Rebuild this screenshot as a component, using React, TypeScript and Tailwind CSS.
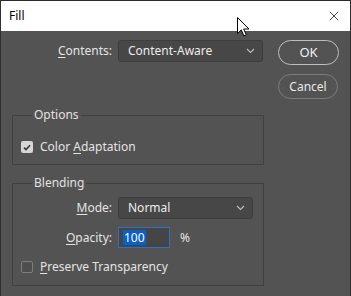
import { X } from "lucide-react";

function Chevron() {
  return (
    <svg width="9" height="6" viewBox="0 0 9 6" className="shrink-0">
      <path d="M1 1l3.5 3.5L8 1" fill="none" stroke="#bdbdbd" strokeWidth="1.1" />
    </svg>
  );
}

function Select({ value, width }: { value: string; width: string }) {
  return (
    <div
      className={`flex h-[22px] ${width} items-center justify-between rounded-[3px] border border-[#3d3d3d] bg-[#474747] pl-[9px] pr-[7px] text-[#ececec]`}
    >
      <span>{value}</span>
      <Chevron />
    </div>
  );
}

function Checkbox({ checked }: { checked: boolean }) {
  return checked ? (
    <div className="flex h-[12px] w-[12px] items-center justify-center rounded-[2px] bg-[#d6d6d6]">
      <svg width="8" height="7" viewBox="0 0 8 7">
        <path d="M1 3.6l2 2L7 1.2" fill="none" stroke="#3a3a3a" strokeWidth="1.6" />
      </svg>
    </div>
  ) : (
    <div className="h-[12px] w-[12px] rounded-[2px] border border-[#7e7e7e] bg-[#4e4e4e]" />
  );
}

function Group({ title, className, children }: { title: string; className: string; children: React.ReactNode }) {
  return (
    <div className={`relative ml-[11px] w-[252px] border border-[#404040] ${className}`}>
      <span className="absolute -top-[9px] left-[19px] bg-[#535353] px-[2px] leading-[16px] text-[#e2e2e2]">
        {title}
      </span>
      {children}
    </div>
  );
}

export default function App() {
  return (
    <div
      className="relative h-[296px] w-[351px] overflow-hidden border-x border-[#2f2f2f] bg-[#535353] text-[12px] text-[#e4e4e4]"
      style={{ fontFamily: '"Noto Sans", "Open Sans", sans-serif' }}
    >
      <div className="flex h-[31px] items-center justify-between border-t border-[#2b2b2b] bg-white pl-[8px] pr-[8px] text-black">
        <span className="text-[12px]">Fill</span>
        <X className="h-[16px] w-[16px]" strokeWidth={1.1} />
      </div>

      <svg className="absolute left-[236px] top-[17px]" width="13" height="20" viewBox="0 0 13 20">
        <path
          d="M0.5 0.5v16l3.8-3.6 2.6 6 2.4-1-2.6-5.9h5.3z"
          fill="#ffffff"
          stroke="#000000"
          strokeWidth="1"
          strokeLinejoin="round"
        />
      </svg>

      <div className="flex pt-[9px]">
        <div className="flex h-[22px] items-center">
          <span className="w-[117px] pr-[6px] text-right">
            <span className="underline underline-offset-2">C</span>ontents:
          </span>
          <Select value="Content-Aware" width="w-[145px]" />
        </div>
        <div className="ml-[15px] flex flex-col gap-[9px]">
          <div className="flex h-[25px] w-[61px] items-center justify-center rounded-full border-[1.5px] border-[#bdbdbd] text-[13px] text-[#f0f0f0]">
            OK
          </div>
          <div className="flex h-[25px] w-[60px] items-center justify-center rounded-full border border-[#7c7c7c] text-[#e8e8e8]">
            Cancel
          </div>
        </div>
      </div>

      <Group title="Options" className="mt-[16px] h-[50px]">
        <div className="flex items-center gap-[7px] pl-[8px] pt-[24px]">
          <Checkbox checked />
          <span className="leading-[14px]">
            Color <span className="underline underline-offset-2">A</span>daptation
          </span>
        </div>
      </Group>

      <Group title="Blending" className="mt-[18px] h-[103px]">
        <div className="flex items-center pt-[13px]">
          <span className="w-[105px] pr-[6px] text-right">
            <span className="underline underline-offset-2">M</span>ode:
          </span>
          <Select value="Normal" width="w-[135px]" />
        </div>
        <div className="mt-[8px] flex items-center">
          <span className="w-[105px] pr-[6px] text-right">
            <span className="underline underline-offset-2">O</span>pacity:
          </span>
          <div className="flex h-[21px] w-[52px] items-center border border-[#2f6fc4] bg-[#454545] pl-[4px]">
            <span className="bg-[#0b60c4] px-[1px] leading-[15px] text-white">100</span>
          </div>
          <span className="ml-[10px]">%</span>
        </div>
        <div className="mt-[12px] flex items-center gap-[7px] pl-[8px]">
          <Checkbox checked={false} />
          <span className="leading-[14px]">
            <span className="underline underline-offset-2">P</span>reserve Transparency
          </span>
        </div>
      </Group>
    </div>
  );
}
